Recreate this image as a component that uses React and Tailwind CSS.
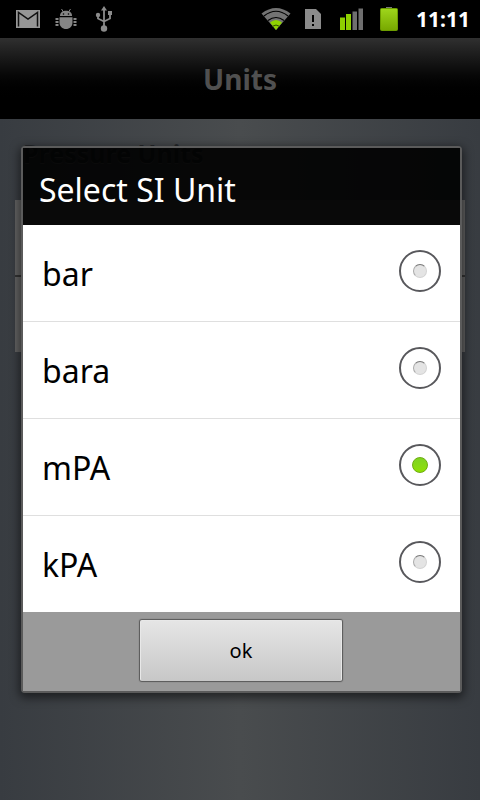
import { useState } from 'react';

const UNITS = ['bar', 'bara', 'mPA', 'kPA'];

function MailIcon() {
  return (
    <svg width="24" height="18" viewBox="0 0 24 18" aria-hidden="true">
      <rect width="24" height="18" fill="#969696" />
      <path d="M2.5 16.5V2.5L12 9L21.5 2.5V16.5" fill="none" stroke="#111" strokeWidth="1.5" />
    </svg>
  );
}

function DebugIcon() {
  return (
    <svg width="22" height="20" viewBox="0 0 22 20" fill="#858585" aria-hidden="true">
      <path d="M5 7C5 4 7 1.8 11 1.8S17 4 17 7Z" />
      <path d="M6.5 0L8.5 3M15.5 0L13.5 3" stroke="#858585" strokeWidth="1" />
      <path d="M4.5 8.3H17.5V13.5C17.5 17.5 14.5 20 11 20S4.5 17.5 4.5 13.5Z" />
      <path d="M0.5 10H3.5M0.5 13H3.5M0.5 16H3.5M18.5 10H21.5M18.5 13H21.5M18.5 16H21.5" stroke="#858585" strokeWidth="2" />
      <circle cx="8.5" cy="5" r="0.8" fill="#000" />
      <circle cx="13.5" cy="5" r="0.8" fill="#000" />
    </svg>
  );
}

function UsbIcon() {
  return (
    <svg width="18" height="26" viewBox="0 0 18 26" fill="#8c8c8c" aria-hidden="true">
      <path d="M9 0L12 4.5H6Z" />
      <circle cx="9" cy="22.5" r="3.2" />
      <circle cx="3" cy="9" r="2.2" />
      <rect x="13" y="5" width="4" height="4" />
      <path d="M9 4V20M3 9V12.5L9 15.5M15 8V12.5L9 15.5" fill="none" stroke="#8c8c8c" strokeWidth="1.8" />
    </svg>
  );
}

function WifiIcon() {
  return (
    <svg width="30" height="24" viewBox="0 0 30 24" aria-hidden="true">
      <path d="M15 23L0.5 6.5Q15 -4.5 29.5 6.5Z" fill="#737373" />
      <path d="M15 23L9 15.5Q15 10.5 21 15.5Z" fill="#8fd400" />
      <path d="M3 9Q15 -0.5 27 9M7 13.5Q15 7.5 23 13.5" fill="none" stroke="#000" strokeWidth="1.2" />
      <path d="M11 19.5Q15 16.5 19 19.5" fill="none" stroke="#2f4d00" strokeWidth="1" />
    </svg>
  );
}

function SimIcon() {
  return (
    <svg width="16" height="20" viewBox="0 0 16 20" aria-hidden="true">
      <path d="M0 0H11L16 5V20H0Z" fill="#8b8b8b" />
      <path d="M7 6H9V13H7ZM7 15H9V17H7Z" fill="#000" />
    </svg>
  );
}

function SignalIcon() {
  return (
    <svg width="24" height="22" viewBox="0 0 24 22" aria-hidden="true">
      <path d="M0 9.5H5V22H0ZM6 6H11V22H6Z" fill="#8ed000" />
      <path d="M12.5 3.5H17V22H12.5ZM18.5 0.5H23V22H18.5Z" fill="#6f6f6f" />
    </svg>
  );
}

function BatteryIcon() {
  return (
    <svg width="18" height="25" viewBox="0 0 18 25" aria-hidden="true">
      <defs>
        <linearGradient id="charge" x1="0" y1="0" x2="0" y2="1">
          <stop offset="0" stopColor="#9fd61c" />
          <stop offset="1" stopColor="#77a800" />
        </linearGradient>
      </defs>
      <rect x="6" y="0" width="6" height="3" fill="#777" />
      <rect x="0.5" y="1.5" width="17" height="22" rx="1" fill="url(#charge)" stroke="#6d9c00" />
    </svg>
  );
}

function StatusBar() {
  return (
    <div className="flex h-[38px] items-center justify-between bg-black pr-[10px] pl-4">
      <div className="flex items-center">
        <MailIcon />
        <span className="ml-[15px]"><DebugIcon /></span>
        <span className="ml-[18px]"><UsbIcon /></span>
      </div>
      <div className="flex items-center">
        <WifiIcon />
        <span className="ml-[14px]"><SimIcon /></span>
        <span className="ml-[19px]"><SignalIcon /></span>
        <span className="ml-4"><BatteryIcon /></span>
        <time className="ml-[18px] pt-0.5 text-[21px] font-bold text-white">11:11</time>
      </div>
    </div>
  );
}

function UnitRow({ unit, checked, onSelect }) {
  return (
    <label className="flex h-[97px] cursor-pointer items-center justify-between border-b border-[#dfdfdf] pr-[19px] pl-[19px] last:h-24 last:border-b-0">
      <span className="pt-0.5 text-[32px] leading-10">{unit}</span>
      <span className="mb-1 grid size-[42px] place-items-center rounded-full border-2 border-[#58585c]">
        <input
          type="radio"
          name="unit"
          value={unit}
          checked={checked}
          onChange={onSelect}
          className="size-[14px] appearance-none rounded-full border border-[#d4d4d4] border-t-[#777] border-l-[#aaa] bg-[#e4e4e4] checked:size-4 checked:border-[#6fae10] checked:bg-linear-to-b checked:from-[#7ed321] checked:to-[#8fe000]"
        />
      </span>
    </label>
  );
}

function UnitDialog({ value, onChange, onClose }) {
  return (
    <div
      role="dialog"
      aria-labelledby="dialog-title"
      className="mr-[18px] ml-[21px] flex-1 rounded-sm border-2 border-[#5b5b5b] shadow-[0_3px_10px_2px_rgba(0,0,0,0.5)]"
    >
      <h2 id="dialog-title" className="bg-black/90 px-4 pt-[22px] pb-[15px] text-[32px] leading-10 text-white">
        Select SI Unit
      </h2>
      <div className="bg-white text-black">
        {UNITS.map((unit) => (
          <UnitRow key={unit} unit={unit} checked={unit === value} onSelect={() => onChange(unit)} />
        ))}
      </div>
      <div className="flex justify-center bg-[#9a9a9a] pt-2 pb-[10px]">
        <button
          onClick={onClose}
          className="mr-px h-[61px] w-[202px] cursor-pointer rounded-xs border border-[#e8e8e8] border-b-[#c8c8c8] bg-linear-to-b from-[#e5e5e5] to-[#c8c8c8] pt-0.5 text-xl text-black shadow-[0_0_1px_1px_rgba(60,60,60,0.7)]"
        >
          ok
        </button>
      </div>
    </div>
  );
}

export default function App() {
  const [unit, setUnit] = useState('mPA');
  const [open, setOpen] = useState(true);

  return (
    <div className="relative flex min-h-screen flex-col bg-linear-to-r from-[#383c41] via-[#494c4e] to-[#383c41] font-['Noto_Sans','Open_Sans',sans-serif]">
      <StatusBar />
      <header className="flex h-[81px] items-center justify-center bg-linear-to-b from-[#303030] to-black to-80%">
        <h1 className="text-[28px] font-bold text-[#505050]">Units</h1>
      </header>

      <main className="px-[15px] pt-4">
        <h2 className="pl-2 text-[25px] leading-9 font-bold text-[#25282b] text-shadow-[0_1px_0_#666]">Pressure Units</h2>
        <button
          onClick={() => setOpen(true)}
          aria-label="SI unit"
          className="mt-[29px] block h-[77px] w-full border-b-2 border-[#333] bg-[#626262]"
        />
        <button aria-label="Imperial unit" className="block h-[75px] w-full bg-[#626262]" />
      </main>

      {/* dialog floats over the page, below the status bar */}
      {open && (
        <div className="absolute inset-x-0 top-[38px] bottom-0 flex items-center">
          <UnitDialog value={unit} onChange={setUnit} onClose={() => setOpen(false)} />
        </div>
      )}
    </div>
  );
}
